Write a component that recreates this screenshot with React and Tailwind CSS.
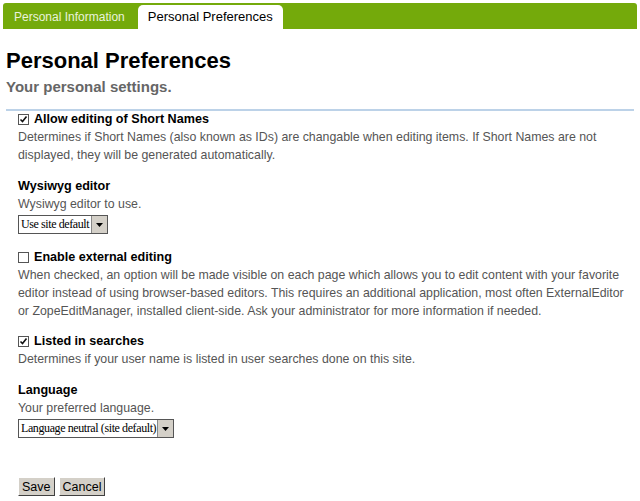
import React from 'react';

function Check({ checked }) {
  return (
    <span className="inline-flex items-center justify-center w-[11px] h-[11px] border border-[#555] bg-white shrink-0 mr-[5px]">
      {checked && (
        <svg width="9" height="9" viewBox="0 0 9 9">
          <path d="M1.5 4.5 L3.5 6.5 L7.5 1.5" stroke="#111" strokeWidth="1.6" fill="none" />
        </svg>
      )}
    </span>
  );
}

function Select({ label, width }) {
  return (
    <div className={`flex items-stretch h-[19px] border border-[#555] bg-white ${width}`}>
      <span className="flex-1 pl-[2px] text-[12px] leading-[17px] text-black font-['Liberation_Serif',serif] whitespace-nowrap overflow-hidden tracking-[-0.4px]">
        {label}
      </span>
      <span className="w-[16px] bg-[#d4d0c8] border-l border-[#888] flex items-center justify-center">
        <svg width="7" height="4" viewBox="0 0 7 4">
          <path d="M0 0 H7 L3.5 4 Z" fill="#000" />
        </svg>
      </span>
    </div>
  );
}

function Field({ title, checkbox, checked, children, className = '' }) {
  return (
    <div className={`pl-[18px] pr-[4px] ${className}`}>
      <div className="flex items-center h-[18px] text-[12.6px] font-bold text-black">
        {checkbox && <Check checked={checked} />}
        <span>{title}</span>
      </div>
      {children}
    </div>
  );
}

function Desc({ children }) {
  return <p className="text-[12.35px] leading-[18px] text-[#555]">{children}</p>;
}

export default function App() {
  return (
    <div className="w-[640px] h-[501px] bg-white font-['Liberation_Sans',Arial,sans-serif] overflow-hidden">
      <div className="mx-[3px] mt-[3px] h-[26px] bg-[#74aa0b] rounded-t-[3px] flex items-end pl-[11px]">
        <div className="h-[24px] flex items-center text-[12px] text-[#eaf3dc]">Personal Information</div>
        <div className="h-[24px] ml-[13px] px-[10px] flex items-center text-[13px] text-black bg-white rounded-t-[5px]">
          Personal Preferences
        </div>
      </div>

      <h1 className="mt-[18px] ml-[6px] text-[22px] leading-[28px] font-bold text-black">Personal Preferences</h1>
      <p className="mt-[3px] ml-[6px] text-[15px] leading-[18px] font-bold text-[#666]">Your personal settings.</p>

      <div className="mt-[13px] mx-[6px] h-[2px] bg-[#bcd2e8]" />

      <Field title="Allow editing of Short Names" checkbox checked className="-mt-[1px]">
        <Desc>
          Determines if Short Names (also known as IDs) are changable when editing items. If Short Names are not displayed, they will be generated automatically.
        </Desc>
      </Field>

      <Field title="Wysiwyg editor" className="mt-[13px]">
        <Desc>Wysiwyg editor to use.</Desc>
        <div className="mt-[2px]">
          <Select label="Use site default" width="w-[90px]" />
        </div>
      </Field>

      <Field title="Enable external editing" checkbox className="mt-[14px]">
        <Desc>
          When checked, an option will be made visible on each page which allows you to edit content with your favorite editor instead of using browser-based editors. This requires an additional application, most often ExternalEditor or ZopeEditManager, installed client-side. Ask your administrator for more information if needed.
        </Desc>
      </Field>

      <Field title="Listed in searches" checkbox checked className="mt-[12px]">
        <Desc>Determines if your user name is listed in user searches done on this site.</Desc>
      </Field>

      <Field title="Language" className="mt-[13px]">
        <Desc>Your preferred language.</Desc>
        <div className="mt-[2px]">
          <Select label="Language neutral (site default)" width="w-[156px]" />
        </div>
      </Field>

      <div className="mt-[39px] ml-[18px] flex gap-[4px]">
        <button className="h-[19px] px-[3px] bg-[#d4d0c8] border border-t-white border-l-white border-r-[#404040] border-b-[#404040] text-[12.5px] leading-[16px] text-black">
          Save
        </button>
        <button className="h-[19px] px-[3px] bg-[#d4d0c8] border border-t-white border-l-white border-r-[#404040] border-b-[#404040] text-[12.5px] leading-[16px] text-black">
          Cancel
        </button>
      </div>
    </div>
  );
}
